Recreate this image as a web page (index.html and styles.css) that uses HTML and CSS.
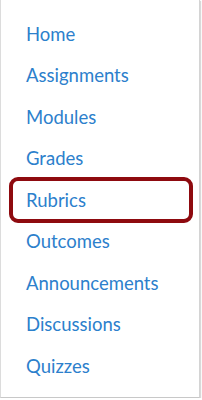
FILE: index.html
```html
<!DOCTYPE html>
<html>
<head>
<meta charset="utf-8">
<link rel="stylesheet" href="styles.css">
</head>
<body>
<nav class="panel">
  <ul class="menu">
    <li><a href="#">Home</a></li>
    <li><a href="#">Assignments</a></li>
    <li><a href="#">Modules</a></li>
    <li><a href="#">Grades</a></li>
    <li class="highlight"><a href="#">Rubrics</a></li>
    <li><a href="#">Outcomes</a></li>
    <li><a href="#">Announcements</a></li>
    <li><a href="#">Discussions</a></li>
    <li><a href="#">Quizzes</a></li>
  </ul>
</nav>
</body>
</html>
```
FILE: styles.css
```css
html, body {
  margin: 0;
  padding: 0;
  background: #ffffff;
}
.panel {
  box-sizing: border-box;
  width: 200px;
  height: 398px;
  border-left: 1px solid #dcdcdc;
  border-right: 1px solid #d4d4d4;
  border-bottom: 1px solid #c8c8c8;
  box-shadow: 1px 1px 1px rgba(0,0,0,0.15);
  background: #fff;
  padding-top: 13px;
}
.menu {
  list-style: none;
  margin: 0;
  padding: 0;
}
.menu li {
  height: 41.5px;
  display: flex;
  align-items: center;
  padding-left: 25px;
  box-sizing: border-box;
}
.menu a {
  font-family: Lato, "Liberation Sans", sans-serif;
  font-size: 18.5px;
  color: #2c80cc;
  text-decoration: none;
}
.menu li.highlight {
  height: 45.5px;
  margin: -2px 6px -2px 8px;
  padding-left: 13px;
  border: 4px solid #8e0a0f;
  border-radius: 9px;
}
```
